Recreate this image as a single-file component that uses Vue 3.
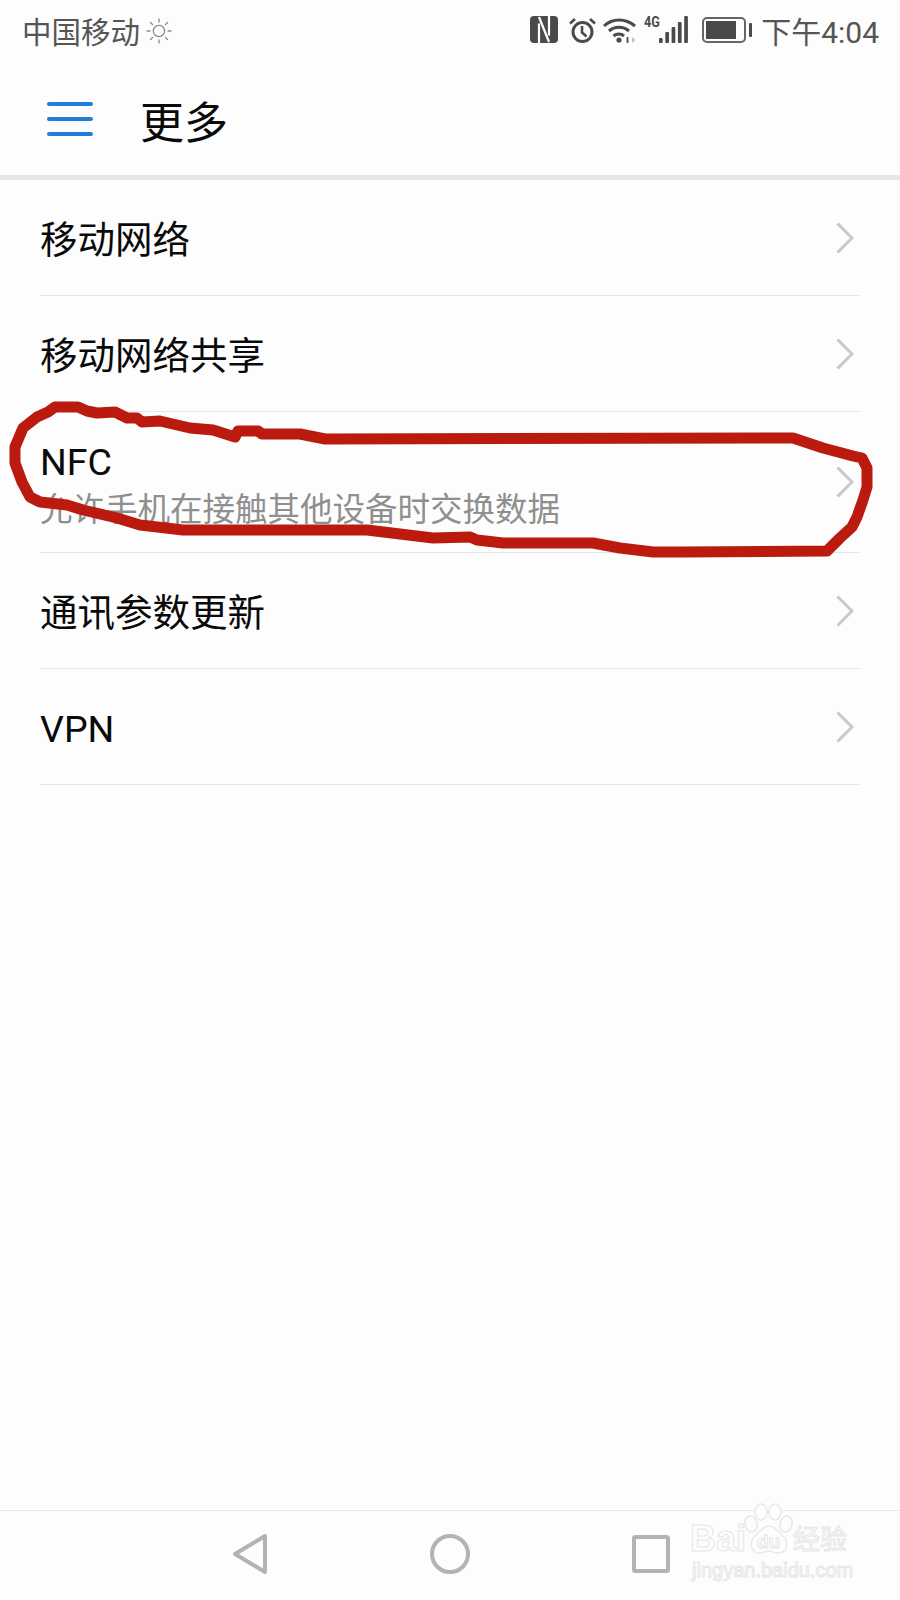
<template>
  <div class="phone">
    <div class="status-bar">
      <div class="status-left">
        <span class="carrier">中国移动</span>
        <svg class="sun" width="26" height="26" viewBox="0 0 26 26" fill="none" stroke="#8a8a8a" stroke-width="1.3" stroke-linecap="round">
          <circle cx="13" cy="13" r="5.6" />
          <path d="M13 1v3M13 22v3M1 13h3M22 13h3M4.5 4.5l2 2M19.5 19.5l2 2M4.5 21.5l2-2M19.5 6.5l2-2" />
        </svg>
      </div>
      <div class="status-right">
        <svg class="ic-nfc" width="28" height="27" viewBox="0 0 28 27">
          <rect width="28" height="27" rx="4" fill="#4a4a4a" />
          <path d="M9 27V7.5M9 1l10 25M19 0v19.5" fill="none" stroke="#fdfdfd" stroke-width="2.2" />
        </svg>
        <svg class="ic-alarm" width="27" height="26" viewBox="0 0 27 26" fill="none" stroke="#4a4a4a">
          <circle cx="13.5" cy="15" r="9.5" stroke-width="3" />
          <path d="M13 9v6.5l4.5 4" stroke-width="2.6" />
          <path d="M1 6.5L6 2M26 6.5L21 2" stroke-width="2.6" />
        </svg>
        <svg class="ic-wifi" width="33" height="25" viewBox="0 0 33 25" fill="none" stroke="#4a4a4a" stroke-width="3">
          <path d="M1 8C9.5 0 22.5 0 32 8" />
          <path d="M6 13c5.8-5 14.2-5 20 0" />
          <path d="M10.5 18c3-2.6 7.5-2.6 10.5 0" />
          <circle cx="16" cy="22" r="2.6" fill="#4a4a4a" stroke="none" />
          <path d="M24.5 19v6" stroke-width="1.8" />
          <path d="M29 19v6l3.5-3z" fill="#c4c4c4" stroke="none" />
        </svg>
        <div class="signal">
          <span class="net-type">4G</span>
          <svg width="29" height="27" viewBox="0 0 29 27" fill="#4a4a4a">
            <rect x="0" y="22" width="3.7" height="5" rx="1" />
            <rect x="6.3" y="16" width="3.7" height="11" rx="1" />
            <rect x="12.6" y="11" width="3.7" height="16" rx="1" />
            <rect x="18.9" y="6" width="3.7" height="21" rx="1" />
            <rect x="25.2" y="0" width="3.7" height="27" rx="1" />
          </svg>
        </div>
        <div class="battery">
          <div class="battery-body"><div class="battery-level"></div></div>
          <div class="battery-tip"></div>
        </div>
        <span class="time">下午4:04</span>
      </div>
    </div>

    <header class="header">
      <div class="menu-btn"><i></i><i></i><i></i></div>
      <h1 class="title">更多</h1>
    </header>

    <ul class="list">
      <li v-for="item in items" :key="item.title" class="row" :class="{ tall: item.sub }">
        <div class="row-text">
          <div class="row-title">{{ item.title }}</div>
          <div v-if="item.sub" class="row-sub">{{ item.sub }}</div>
        </div>
        <svg class="chevron" width="18" height="32" viewBox="0 0 18 32" fill="none" stroke="#c9c9c9" stroke-width="3">
          <path d="M1.5 1.5L16 16 1.5 30.5" />
        </svg>
      </li>
    </ul>

    <nav class="nav">
      <svg width="36" height="42" viewBox="0 0 36 42" fill="none" stroke="#b3b3b3" stroke-width="4" stroke-linejoin="round">
        <path d="M33 3L3 21l30 18z" />
      </svg>
      <svg width="40" height="42" viewBox="0 0 40 42" fill="none" stroke="#b3b3b3" stroke-width="4">
        <circle cx="20" cy="21" r="18" />
      </svg>
      <svg width="38" height="38" viewBox="0 0 38 38" fill="none" stroke="#b3b3b3" stroke-width="4" stroke-linejoin="round">
        <rect x="2" y="2" width="34" height="34" rx="1.5" />
      </svg>
    </nav>

    <div class="watermark">
      <span class="wm-bai">Bai</span>
      <svg class="wm-paw" width="50" height="52" viewBox="0 0 50 52" fill="#fdfdfd" stroke="#e8e8e8" stroke-width="1.5">
        <ellipse cx="17" cy="9" rx="6" ry="8" />
        <ellipse cx="31" cy="9" rx="6" ry="8" />
        <ellipse cx="7" cy="21" rx="6" ry="8" transform="rotate(-15 7 21)" />
        <ellipse cx="42" cy="21" rx="6" ry="8" transform="rotate(15 42 21)" />
        <path d="M25 23c7 0 9 6 14 10 6 5 5 17-5 17-4 0-6-2-9-2s-5 2-9 2C6 50 5 38 11 33c5-4 7-10 14-10z" />
      </svg>
      <span class="wm-du">du</span>
      <span class="wm-cn">经验</span>
      <span class="wm-url">jingyan.baidu.com</span>
    </div>

    <svg class="annotation" width="900" height="600" viewBox="0 0 900 600" fill="none">
      <path
        d="M15 463L15 447L23 428L37 417L48 412L55 407L78 407L87 411L97 413L115 412L127 418L137 418L142 422L160 421L190 428L213 430L235 437L238 431L258 431L262 434L300 434L320 438L325 439L777 438L793 438L823 448L853 456L862 458L867 468L867 487L863 500L857 517L852 527L840 538L827 551L683 552L653 552L620 548L593 543L567 543L503 543L477 540L470 537L433 538L367 530L333 530L183 530L140 525L117 518L83 510L67 505L40 502L30 497L22 482Z"
        stroke="#bb1b0e"
        stroke-width="11"
        stroke-linejoin="round"
      />
    </svg>
  </div>
</template>

<script setup>
const items = [
  { title: '移动网络' },
  { title: '移动网络共享' },
  { title: 'NFC', sub: '允许手机在接触其他设备时交换数据' },
  { title: '通讯参数更新' },
  { title: 'VPN' },
]
</script>

<style>
body {
  margin: 0;
  background: #fdfdfd;
}
</style>

<style scoped>
.phone {
  position: relative;
  display: flex;
  flex-direction: column;
  width: 900px;
  height: 1600px;
  overflow: hidden;
  background: #fdfdfd;
  font-family: Roboto, "Noto Sans CJK SC", sans-serif;
}

.status-bar {
  display: flex;
  justify-content: space-between;
  align-items: center;
  box-sizing: border-box;
  height: 62px;
  padding: 0 21px 3px 22px;
  color: #555;
  font-size: 30px;
}

.status-left,
.status-right {
  display: flex;
  align-items: center;
}

.carrier {
  font-size: 29.5px;
}

.sun {
  margin: 3px 0 0 6px;
}

.ic-alarm {
  margin-left: 11px;
}

.ic-wifi {
  margin-left: 7px;
  margin-top: 1px;
}

.signal {
  position: relative;
  display: flex;
  align-items: flex-end;
  justify-content: flex-end;
  width: 44px;
  height: 27px;
  margin-left: 8px;
}

.net-type {
  position: absolute;
  top: -1px;
  left: 0;
  color: #4a4a4a;
  font-size: 14px;
  font-weight: 700;
  line-height: 14px;
  transform: scaleX(0.9);
  transform-origin: left;
}

.battery {
  display: flex;
  align-items: center;
  margin-left: 14px;
}

.battery-body {
  width: 44px;
  height: 26px;
  box-sizing: border-box;
  padding: 2px;
  border: 2px solid #666;
  border-radius: 5px;
}

.battery-level {
  width: 30px;
  height: 100%;
  background: #4a4a4a;
}

.battery-tip {
  width: 3px;
  height: 14px;
  margin-left: 3px;
  background: #4a4a4a;
  border-radius: 1px;
}

.time {
  margin-left: 9px;
  white-space: nowrap;
}

.header {
  display: flex;
  align-items: center;
  height: 113px;
  padding-left: 47px;
  border-bottom: 5px solid #e6e6e6;
}

.menu-btn {
  display: flex;
  flex-direction: column;
  gap: 11px;
  width: 46px;
}

.menu-btn i {
  display: block;
  height: 4px;
  background: #1f7fd6;
  border-radius: 2px;
}

.title {
  margin: 11px 0 0 47px;
  color: #0a0a0a;
  font-size: 44px;
  font-weight: 400;
  line-height: 1.2;
}

.list {
  margin: 0;
  padding: 0;
  list-style: none;
}

.row {
  display: flex;
  justify-content: space-between;
  align-items: center;
  height: 116px;
  box-sizing: border-box;
  margin: 0 40px;
  padding-right: 6px;
  border-bottom: 1px solid #e6e6e6;
}

.row.tall {
  height: 141px;
}

.row-text {
  padding-top: 4px;
}

.tall .row-text {
  padding-top: 8px;
}

.row-title {
  color: #0a0a0a;
  font-size: 37.5px;
  line-height: 48px;
}

.row-sub {
  color: #8f8f8f;
  font-size: 32.5px;
  line-height: 49px;
}

.nav {
  display: flex;
  align-items: center;
  gap: 162px;
  height: 86px;
  margin-top: auto;
  padding: 0 0 3px 232px;
  border-top: 1px solid #e6e6e6;
}

.watermark {
  position: absolute;
  left: 690px;
  top: 1503px;
  width: 170px;
  height: 80px;
  color: #fdfdfd;
  -webkit-text-stroke: 1px #e6e6e6;
}

.wm-bai {
  position: absolute;
  left: 0;
  top: 16px;
  font-family: "Liberation Sans", sans-serif;
  font-size: 36px;
  font-weight: 700;
  line-height: 40px;
}

.wm-paw {
  position: absolute;
  left: 54px;
  top: 0;
}

.wm-du {
  position: absolute;
  left: 67px;
  top: 28px;
  font-family: "Liberation Sans", sans-serif;
  font-size: 19px;
  line-height: 22px;
  font-weight: 700;
}

.wm-cn {
  position: absolute;
  left: 103px;
  top: 20px;
  font-size: 27px;
  line-height: 34px;
  white-space: nowrap;
}

.wm-url {
  position: absolute;
  left: 2px;
  top: 55px;
  font-family: "Liberation Sans", sans-serif;
  font-size: 20px;
  line-height: 24px;
  white-space: nowrap;
}

.annotation {
  position: absolute;
  left: 0;
  top: 0;
  pointer-events: none;
}
</style>
